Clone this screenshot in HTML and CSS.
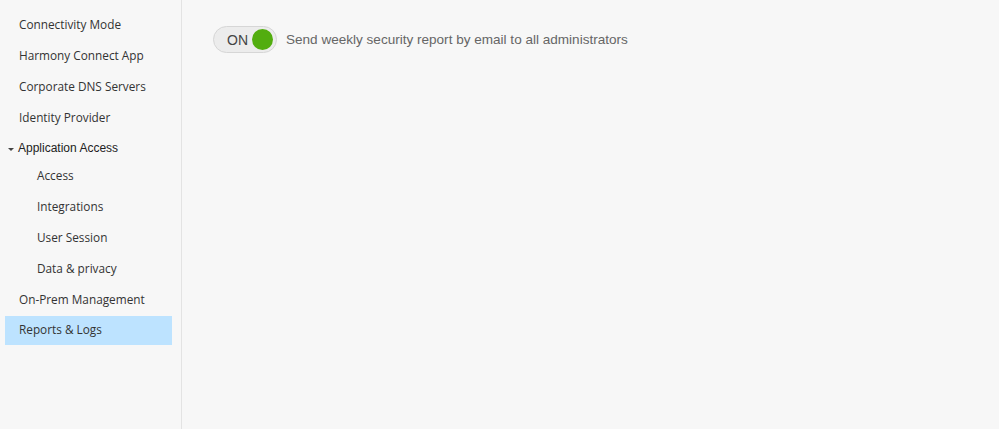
FILE: index.html
```html
<!DOCTYPE html>
<html>
<head>
<meta charset="utf-8">
<link rel="stylesheet" href="styles.css">
</head>
<body>
<div class="layout">
  <nav class="sidebar">
    <div class="item">Connectivity Mode</div>
    <div class="item">Harmony Connect App</div>
    <div class="item">Corporate DNS Servers</div>
    <div class="item">Identity Provider</div>
    <div class="group"><span class="caret"></span>Application Access</div>
    <div class="sub first">Access</div>
    <div class="sub">Integrations</div>
    <div class="sub">User Session</div>
    <div class="sub">Data &amp; privacy</div>
    <div class="item">On-Prem Management</div>
    <div class="item active">Reports &amp; Logs</div>
  </nav>
  <main class="content">
    <div class="setting">
      <div class="toggle"><span class="toggle-label">ON</span><span class="knob"></span></div>
      <span class="setting-text">Send weekly security report by email to all administrators</span>
    </div>
  </main>
</div>
</body>
</html>
```

FILE: styles.css
```css
html, body {
  margin: 0;
  padding: 0;
  background: #f7f7f7;
  height: 100%;
}
.layout {
  display: flex;
  height: 429px;
}
.sidebar {
  width: 182px;
  border-right: 1px solid #e3e3e3;
  box-sizing: border-box;
  padding: 9px 9px 0 5px;
  font-family: "Open Sans", sans-serif;
  font-size: 11.8px;
  color: #333;
}
.item {
  height: 31px;
  line-height: 31px;
  padding-left: 14px;
}
.item.active {
  background: #bde3ff;
  height: 29px;
  line-height: 27px;
  margin-top: 1px;
}
.group {
  height: 31px;
  line-height: 31px;
  font-family: "Liberation Sans", Arial, sans-serif;
  font-size: 12px;
  color: #222;
  display: flex;
  align-items: center;
  padding-left: 3px;
}
.caret {
  width: 0;
  height: 0;
  border-left: 3px solid transparent;
  border-right: 3px solid transparent;
  border-top: 3px solid #444;
  margin-right: 4px;
  margin-top: 1px;
}
.sub {
  height: 31px;
  line-height: 31px;
  padding-left: 32px;
}
.sub.first {
  height: 27px;
  line-height: 23px;
}
.content {
  flex: 1;
  padding: 26px 0 0 31px;
}
.setting {
  display: flex;
  align-items: center;
}
.toggle {
  width: 64px;
  height: 27px;
  box-sizing: border-box;
  border: 1px solid #d6d6d6;
  border-radius: 14px;
  background: #ececec;
  display: flex;
  align-items: center;
  padding: 0 3px 0 13px;
}
.toggle-label {
  font-family: "Liberation Sans", Arial, sans-serif;
  font-size: 14px;
  color: #444;
  flex: 1;
}
.knob {
  width: 21px;
  height: 21px;
  border-radius: 50%;
  background: #52ad0f;
}
.setting-text {
  margin-left: 9px;
  font-family: "Liberation Sans", Arial, sans-serif;
  font-size: 13.55px;
  color: #666;
}
```
